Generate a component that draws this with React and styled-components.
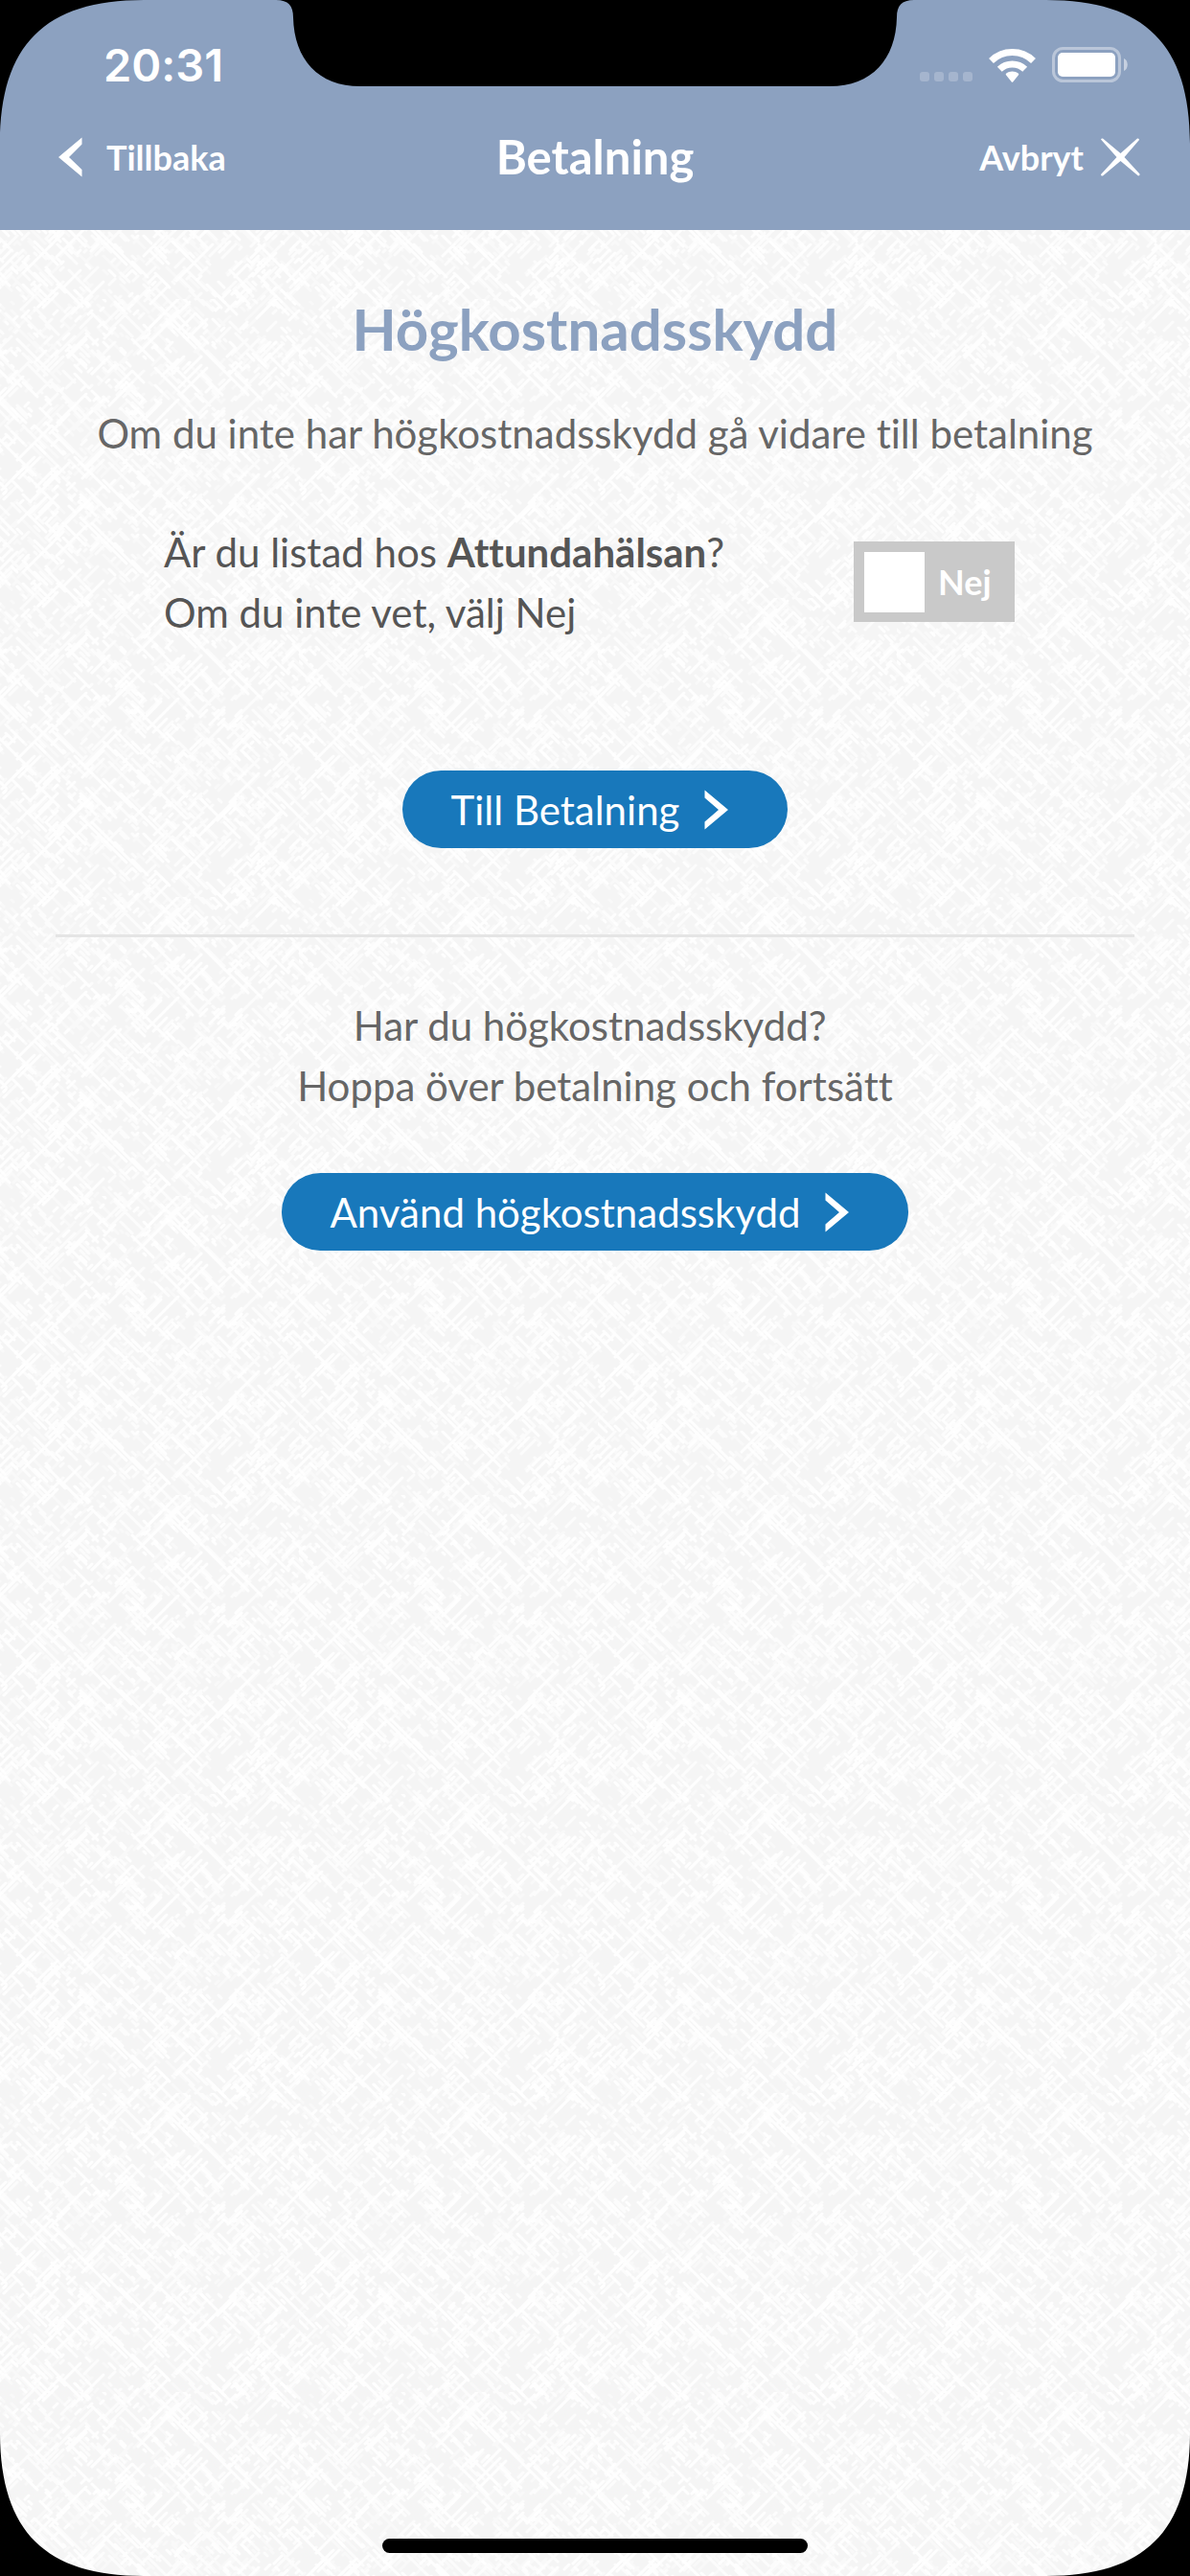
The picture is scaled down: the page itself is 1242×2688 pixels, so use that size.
import React, { useState } from "react";
import styled, { createGlobalStyle } from "styled-components";

const TILE = 312;

// Woven paper texture: short diagonal threads on a light grey tile that repeats
function weaveTile() {
  let seed = 7;
  const random = () => {
    seed = (seed * 16807) % 2147483647;
    return seed / 2147483647;
  };
  const groups = ["", "", ""];

  for (let i = 0; i < 1500; i++) {
    const x = Math.floor(random() * 52) * 6;
    const y = Math.floor(random() * 104) * 3;
    const length = Math.round(2 + random() * random() * random() * 60);
    const dir = random() > 0.5 ? 1 : -1;
    const group = Math.floor(random() * 3);

    // repeat what runs over an edge on the other side of the tile
    const xs = [x];
    if (dir === 1 && x + length > TILE - 3) xs.push(x - TILE);
    if (dir === -1 && x - length < 3) xs.push(x + TILE);
    const ys = y + length > TILE - 3 ? [y, y - TILE] : [y];

    xs.forEach((startX) => {
      ys.forEach((startY) => {
        groups[group] += `M${startX} ${startY}l${length * dir} ${length}`;
      });
    });
  }

  const paths = groups
    .map((d, i) => `<path d="${d}" stroke-opacity="${[0.9, 0.65, 0.4][i]}"/>`)
    .join("");

  const svg = `<svg xmlns="http://www.w3.org/2000/svg" width="${TILE}" height="${TILE}"><rect width="${TILE}" height="${TILE}" fill="#f5f5f5"/><g fill="none" stroke="#fff" stroke-width="3" stroke-linecap="round">${paths}</g></svg>`;
  return `url("data:image/svg+xml,${encodeURIComponent(svg)}")`;
}

const weave = weaveTile();

const GlobalStyle = createGlobalStyle`
  * {
    box-sizing: border-box;
  }

  body {
    margin: 0;
    background-color: #f8f8f8;
    font-family: Lato, "Open Sans", sans-serif;
    font-variant-ligatures: none;
  }

  button {
    border: none;
    background: none;
    padding: 0;
    color: white;
    font-family: inherit;
    font-variant-ligatures: none;
    cursor: pointer;
  }
`

const Screen = styled.div `
  position: relative;
  display: flex;
  flex-direction: column;
  min-height: 100vh;
  overflow: hidden;
  background-color: #f8f8f8;
  background-image: ${weave};
`

const Header = styled.header `
  background-color: #8ca1c0;
  padding-bottom: 48px;
  color: white;
`

const StatusBar = styled.div `
  display: flex;
  align-items: center;
  justify-content: space-between;
  height: 135px;
  padding: 0 65px 0 108px;
`

const Clock = styled.time `
  font-family: Inter, sans-serif;
  font-size: 47px;
  font-weight: 600;
`

const StatusIcons = styled.div `
  display: flex;
  align-items: center;
  gap: 17px;
`

const Nav = styled.nav `
  display: grid;
  grid-template-columns: 1fr auto 1fr;
  align-items: center;
  height: 57px;
  padding: 0 52px;

  h1{
    margin: 0;
    font-size: 49px;
    line-height: 57px;
    font-weight: 700;
  }
`

const NavButton = styled.button `
  display: flex;
  align-items: center;
  justify-self: ${(props) => props.$side};
  gap: ${(props) => (props.$side === "start" ? "24px" : "18px")};
  padding-left: ${(props) => (props.$side === "start" ? "9px" : "0")};
  font-size: 36px;
  line-height: 44px;
  font-weight: 700;
`

const Content = styled.main `
  display: flex;
  flex-direction: column;
  align-items: center;
  flex: 1;
  padding: 67px 58px 60px;
`

const Heading = styled.h2 `
  margin: 0 0 41px;
  color: #8ca1c0;
  font-size: 60px;
  line-height: 72px;
  font-weight: 700;
`

const Text = styled.p `
  margin: 0 0 59px;
  padding-top: 1px;
  color: #666;
  font-size: 42px;
  line-height: 63px;
  text-align: center;
`

const QuestionRow = styled.div `
  display: flex;
  align-items: center;
  justify-content: space-between;
  align-self: stretch;
  margin-bottom: 133px;
  padding: 0 125px 0 113px;
`

const Question = styled.label `
  padding-top: 2px;
  color: #555;
  font-size: 42px;
  line-height: 63px;
`

const Switch = styled.label `
  display: flex;
  align-items: center;
  flex-direction: ${(props) => (props.$on ? "row-reverse" : "row")};
  gap: 14px;
  width: 168px;
  height: 84px;
  padding: 0 11px;
  background-color: ${(props) => (props.$on ? "#1878bb" : "#c9c9c9")};
  color: white;
  font-size: 36px;
  font-weight: 700;
  cursor: pointer;

  input{
    appearance: none;
    width: 63px;
    height: 63px;
    margin: 0;
    background-color: white;
    cursor: pointer;
  }
`

const PillButton = styled.button `
  display: flex;
  align-items: center;
  gap: 26px;
  height: 81px;
  padding: 0 62px 0 51px;
  border-radius: 41px;
  background-color: #1878bb;
  font-size: 42px;
`

const Divider = styled.hr `
  align-self: stretch;
  height: 3px;
  margin: 90px 0 60px;
  border: none;
  background-color: #e5e5e5;
`

const Notch = styled.svg `
  position: absolute;
  top: 0;
  left: 50%;
  transform: translateX(-50%);
`

const Corner = styled.svg `
  position: absolute;
  ${(props) => props.$v}: 0;
  ${(props) => props.$h}: 0;
  transform: scale(${(props) => (props.$h === "right" ? -1 : 1)}, ${(props) => (props.$v === "bottom" ? -1 : 1)});
`

const HomeIndicator = styled.div `
  align-self: center;
  width: 444px;
  height: 15px;
  margin-bottom: 24px;
  border-radius: 8px;
  background-color: black;
`

function SignalIcon() {
  return (
    <svg width="55" height="36" viewBox="0 0 55 36" fill="white" fillOpacity="0.22">
      {[0, 15, 30, 45].map((x) => (
        <rect key={x} x={x} y="25" width="10" height="10" rx="3" />
      ))}
    </svg>
  );
}

function WifiIcon() {
  return (
    <svg width="49" height="36" viewBox="0 0 49 36">
      <g fill="none" stroke="white" strokeWidth="7">
        <path d="M2.500 13.500A31.500 31.500 0 0 1 46.500 13.500" />
        <path d="M11.300 22.300A19 19 0 0 1 37.700 22.300" />
      </g>
      <path d="M31 28.200c.4-.4.4-1 0-1.400-3.800-3.100-9.200-3.100-13 0-.4.4-.4 1 0 1.400l5.800 7.200c.4.4 1 .4 1.400 0z" fill="white" />
    </svg>
  );
}

function BatteryIcon() {
  return (
    <svg width="79" height="37" viewBox="0 0 79 37" fill="white">
      <rect x="1.500" y="1.500" width="69" height="34" rx="10" fill="none" stroke="white" strokeOpacity="0.4" strokeWidth="3" />
      <rect x="6" y="6" width="60" height="25" rx="5" />
      <path d="M75 12c5 2 5 11 0 13z" fillOpacity="0.5" />
    </svg>
  );
}

function ChevronLeft() {
  return (
    <svg width="26" height="42" viewBox="0 0 26 42" fill="white">
      <path d="M0 21L24.500 0.500V7.500L11 21L24.500 34V41.500Z" />
    </svg>
  );
}

function ChevronRight() {
  return (
    <svg width="25" height="42" viewBox="0 0 25 42" fill="white">
      <path d="M25 21L0.500 0.500V8.500L15 21L0.500 33.500V41.500Z" />
    </svg>
  );
}

function CloseIcon() {
  return (
    <svg width="41" height="40" viewBox="0 0 41 40" fill="white">
      <path d="M0 1.500Q.5 0 2 .5L20.500 16L38 .5Q40 0 40 2L24.500 20L40.500 37.500Q41 39.500 39 39.500L20.500 24L2 39.500Q0 40 0 38L16.500 20Z" />
    </svg>
  );
}

function ScreenCorner({ v, h }) {
  return (
    <Corner $v={v} $h={h} width="150" height="150" viewBox="0 0 150 150" aria-hidden="true">
      <path d="M0 0H150C47 0 0 47 0 150Z" />
    </Corner>
  );
}

export default function App() {
  const [listed, setListed] = useState(false);

  return (
    <Screen>
      <GlobalStyle />
      <Header>
        <StatusBar>
          <Clock>20:31</Clock>
          <StatusIcons>
            <SignalIcon />
            <WifiIcon />
            <BatteryIcon />
          </StatusIcons>
        </StatusBar>
        <Nav>
          <NavButton $side="start">
            <ChevronLeft />
            Tillbaka
          </NavButton>
          <h1>Betalning</h1>
          <NavButton $side="end">
            Avbryt
            <CloseIcon />
          </NavButton>
        </Nav>
      </Header>

      <Content>
        <Heading>Högkostnadsskydd</Heading>
        <Text>Om du inte har högkostnadsskydd gå vidare till betalning</Text>
        <QuestionRow>
          <Question htmlFor="listed">
            Är du listad hos <b>Attundahälsan</b>?<br />
            Om du inte vet, välj Nej
          </Question>
          <Switch $on={listed}>
            <input
              id="listed"
              type="checkbox"
              role="switch"
              checked={listed}
              onChange={(e) => setListed(e.target.checked)}
            />
            {listed ? "Ja" : "Nej"}
          </Switch>
        </QuestionRow>
        <PillButton>
          Till Betalning
          <ChevronRight />
        </PillButton>
        <Divider />
        <Text>
          Har du högkostnadsskydd?&nbsp;<br />
          Hoppa över betalning och fortsätt
        </Text>
        <PillButton>
          Använd högkostnadsskydd
          <ChevronRight />
        </PillButton>
      </Content>

      <HomeIndicator />
      <Notch width="666" height="90" viewBox="288 0 666 90" aria-hidden="true">
        <path d="M288 0C301 0 306 6 306 18C307 62 332 90 376 90H866C910 90 935 62 936 18C936 6 941 0 954 0Z" />
      </Notch>
      <ScreenCorner v="top" h="left" />
      <ScreenCorner v="top" h="right" />
      <ScreenCorner v="bottom" h="left" />
      <ScreenCorner v="bottom" h="right" />
    </Screen>
  );
}
